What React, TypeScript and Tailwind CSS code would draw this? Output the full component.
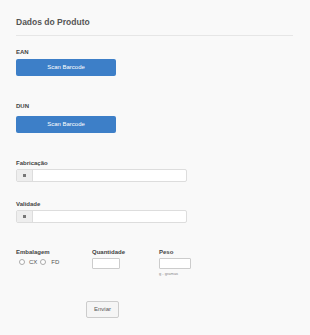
export default function App() {
  return (
    <div
      className="min-h-[335px] w-[310px] bg-[#f9f9f9] text-[#555]"
      style={{ fontFamily: '"Liberation Sans", Arial, sans-serif' }}
    >
      <div className="px-4 pt-[16px]">
        {/* cabeçalho */}
        <h2 className="text-[8.5px] leading-[12px] font-bold text-[#555]">Dados do Produto</h2>
        <div className="mt-[7px] mr-[1px] h-px bg-[#e6e6e6]" />

        {/* EAN */}
        <label className="mt-[12px] block text-[6px] leading-[8px] font-bold text-[#444]">EAN</label>
        <button className="mt-[3px] block h-[17px] w-[100px] rounded-[2px] bg-[#3d7fc8] text-[6px] text-white">
          Scan Barcode
        </button>

        {/* DUN */}
        <label className="mt-[26px] block text-[6px] leading-[8px] font-bold text-[#444]">DUN</label>
        <button className="mt-[6px] block h-[17px] w-[100px] rounded-[2px] bg-[#3d7fc8] text-[6px] text-white">
          Scan Barcode
        </button>

        {/* Fabricação */}
        <label className="mt-[26px] block text-[6px] leading-[8px] font-bold text-[#444]">Fabricação</label>
        <div className="mt-[2px] flex h-[13px] w-[171px] overflow-hidden rounded-[2px] border border-[#ddd] bg-white">
          <div className="flex w-[16px] items-center justify-center border-r border-[#ddd] bg-[#eee]">
            <span className="block h-[3px] w-[3px] bg-[#777]" />
          </div>
          <div className="flex-1" />
        </div>

        {/* Validade */}
        <label className="mt-[18px] block text-[6px] leading-[8px] font-bold text-[#444]">Validade</label>
        <div className="mt-[2px] flex h-[13px] w-[171px] overflow-hidden rounded-[2px] border border-[#ddd] bg-white">
          <div className="flex w-[16px] items-center justify-center border-r border-[#ddd] bg-[#eee]">
            <span className="block h-[3px] w-[3px] bg-[#777]" />
          </div>
          <div className="flex-1" />
        </div>

        {/* Embalagem / Quantidade / Peso */}
        <div className="mt-[25px] flex">
          <div className="w-[76px]">
            <label className="block text-[6px] leading-[8px] font-bold text-[#444]">Embalagem</label>
            <div className="mt-[2px] flex items-center pl-[3px] text-[6px] leading-[8px] text-[#555]">
              <span className="block h-[6px] w-[6px] rounded-full border border-[#aaa] bg-white" />
              <span className="ml-[4px]">CX</span>
              <span className="ml-[3px] block h-[6px] w-[6px] rounded-full border border-[#aaa] bg-white" />
              <span className="ml-[5px]">FD</span>
            </div>
          </div>
          <div className="w-[67px]">
            <label className="block text-[6px] leading-[8px] font-bold text-[#444]">Quantidade</label>
            <div className="mt-[2px] h-[11px] w-[28px] rounded-[1px] border border-[#ccc] bg-white" />
          </div>
          <div>
            <label className="block text-[6px] leading-[8px] font-bold text-[#444]">Peso</label>
            <div className="mt-[2px] h-[11px] w-[32px] rounded-[1px] border border-[#ccc] bg-white" />
            <p className="mt-[2px] text-[4px] leading-[5px] text-[#888]">g - gramas</p>
          </div>
        </div>

        {/* Enviar */}
        <div className="mt-[18px] pl-[70px]">
          <button className="h-[17px] w-[33px] rounded-[2px] border border-[#ccc] bg-[#f5f5f5] text-[6px] text-[#555]">
            Enviar
          </button>
        </div>
      </div>
    </div>
  );
}
